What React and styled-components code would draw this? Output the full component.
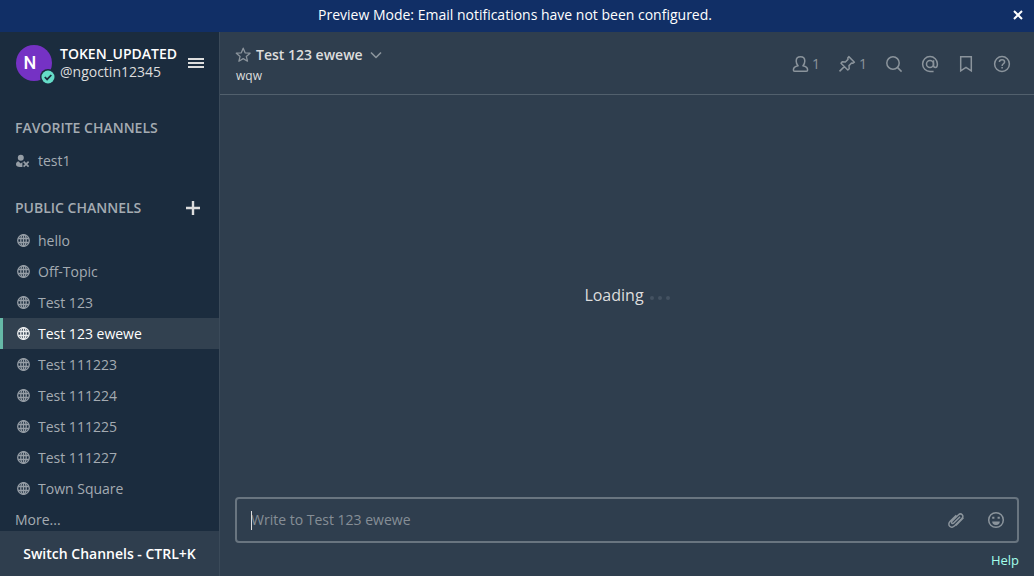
import React from "react";
import styled, { createGlobalStyle, css } from "styled-components";

const Global = createGlobalStyle`
  *, *::before, *::after { box-sizing: border-box; }
  body {
    margin: 0;
    background: #2f3e4e;
    color: #dddddd;
    font-family: "Open Sans", sans-serif;
    font-size: 14px;
    line-height: 20px;
  }
  button { font: inherit; color: inherit; background: none; border: 0; padding: 0; cursor: pointer; }
`;

const Page = styled.div`
  height: 100vh;
  display: flex;
  flex-direction: column;
`;

const Banner = styled.div`
  flex: none;
  height: 32px;
  padding: 0 10px 2px 18px;
  display: flex;
  align-items: center;
  background: #112f66;
  color: #ffffff;
`;

const BannerText = styled.span`
  flex: 1;
  text-align: center;
`;

const BannerClose = styled.button`
  width: 12px;
  display: flex;
  justify-content: center;
`;

const Body = styled.div`
  flex: 1;
  min-height: 0;
  display: flex;
`;

const Sidebar = styled.aside`
  flex: none;
  width: 220px;
  display: flex;
  flex-direction: column;
  background: #1b2c3e;
  border-right: 1px solid #3b4a59;
`;

const TeamHeader = styled.header`
  flex: none;
  height: 63px;
  padding: 0 15px 1px 16px;
  display: flex;
  align-items: center;
  gap: 8px;
`;

const Avatar = styled.div`
  position: relative;
  flex: none;
  width: 36px;
  height: 36px;
  border-radius: 50%;
  background: #7532c4;
  color: #ffffff;
  font: 500 18px/36px Roboto, sans-serif;
  padding-right: 8px;
  text-align: center;
`;

const Status = styled.svg`
  position: absolute;
  right: -4px;
  bottom: -4px;
`;

const Names = styled.div`
  flex: 1;
  display: flex;
  flex-direction: column;
  line-height: 18px;
`;

const TeamName = styled.strong`
  color: #ffffff;
  font-weight: 600;
`;

const MenuButton = styled.button`
  display: flex;
  color: #dddddd;
`;

const ChannelNav = styled.nav`
  flex: 1;
  min-height: 0;
  overflow: hidden;
  padding-top: 16px;
`;

const Section = styled.section`
  margin-bottom: 15px;
`;

const SectionTitle = styled.div`
  height: 34px;
  padding: 0 19px 0 15px;
  display: flex;
  align-items: center;
  justify-content: space-between;
  color: #a4abb2;

  h2 { margin: 0; font-size: 14px; font-weight: 600; }
  button { display: flex; color: #dddddd; }
`;

const List = styled.ul`
  margin: 0;
  padding: 0;
  list-style: none;
`;

const ChannelLink = styled.a`
  height: 31px;
  padding: 0 12px;
  border-left: 3px solid transparent;
  display: flex;
  align-items: center;
  gap: 7px;
  color: #a4abb2;
  text-decoration: none;

  svg { flex: none; opacity: 0.9; }

  ${({ $active }) => $active && css`
    border-left-color: #66b9a7;
    background: #324150;
    color: #ffffff;
  `}
`;

const Switcher = styled.button`
  flex: none;
  height: 45px;
  background: #2f3e4e;
  color: #ffffff;
  font-weight: 600;
`;

const Main = styled.main`
  flex: 1;
  min-width: 0;
  display: flex;
  flex-direction: column;
`;

const ChannelHeader = styled.header`
  flex: none;
  height: 63px;
  padding: 2px 23px 0 15px;
  border-bottom: 1px solid #52606d;
  display: flex;
  align-items: center;
  justify-content: space-between;
`;

const ChannelInfo = styled.div`
  padding-top: 2px;
`;

const TitleRow = styled.div`
  display: flex;
  align-items: center;
  gap: 5px;

  button { display: flex; color: #8b949c; }
  h1 { margin: 0 2px 0 0; font-size: 14px; line-height: 20px; font-weight: 600; }
`;

const Topic = styled.p`
  margin: 2px 0 0 1px;
  font-size: 12px;
  line-height: 18px;
`;

const Tools = styled.div`
  display: flex;
  align-items: center;
  gap: 18px;
`;

const ToolButton = styled.button`
  display: flex;
  align-items: center;
  gap: 3px;
  color: #8b949c;
`;

const Loading = styled.div`
  flex: 1;
  padding-bottom: 2px;
  display: flex;
  align-items: center;
  justify-content: center;
  gap: 6px;
  font-size: 16px;
`;

const Dots = styled.span`
  display: flex;
  gap: 4px;
  padding-top: 6px;

  i { width: 4px; height: 4px; border-radius: 50%; background: #445261; }
`;

const Composer = styled.form`
  flex: none;
  padding: 0 15px 6px;
`;

const InputBox = styled.div`
  position: relative;
  height: 46px;
  padding: 0 12px 0 14px;
  border: 2px solid #697580;
  border-radius: 4px;
  display: flex;
  align-items: center;
  gap: 22px;

  &::before {
    content: "";
    position: absolute;
    left: 14px;
    top: 12px;
    width: 1px;
    height: 19px;
    background: #dddddd;
  }
`;

const MessageInput = styled.input`
  flex: 1;
  min-width: 0;
  padding: 0;
  border: 0;
  outline: 0;
  background: none;
  color: #dddddd;
  font: inherit;

  &::placeholder { color: #868e96; opacity: 1; }
`;

const Help = styled.a`
  display: block;
  margin-top: 7px;
  text-align: right;
  font-size: 13px;
  color: #a4ffeb;
  text-decoration: none;
`;

const Icon = ({ size = 18, width = 1.5, box = 18, children }) => (
  <svg width={size} height={size} viewBox={`0 0 ${box} ${box}`} fill="none" stroke="currentColor"
    strokeWidth={width} strokeLinejoin="round" aria-hidden="true">
    {children}
  </svg>
);

const Globe = () => (
  <Icon size={16} box={16} width={1.3}>
    <circle cx="8.5" cy="7.5" r="5.8" />
    <ellipse cx="8.5" cy="7.5" rx="2.7" ry="5.8" />
    <path d="M8.5 1.7v11.6M3.2 5.5h10.6M3.2 9.5h10.6" />
  </Icon>
);

const RemovedUser = () => (
  <Icon size={16} box={16} width={1.6}>
    <circle cx="5.8" cy="4.8" r="3" fill="currentColor" stroke="none" />
    <path d="M3.3 8.2 5.8 10.4l1.6-1.4v5H5C2.3 14 1 12.9 1 11.2c0-1.4.8-2.5 2.3-3Z" fill="currentColor" stroke="none" />
    <path d="m8.6 8.6 5 5m0-5-5 5" />
  </Icon>
);

const tools = [
  { label: "Members", count: 1, icon: (
    <Icon>
      <path d="M9.5 1.8C6.8 1.8 5.2 3.6 5.2 6c0 2 .7 3.8 1.9 4.8-2.7.5-4.7 1.8-4.7 4.1 0 .8.4 1.3 1.2 1.3h11.8c.8 0 1.2-.5 1.2-1.3 0-2.3-2-3.6-4.7-4.1 1.2-1 1.9-2.8 1.9-4.8 0-2.4-1.6-4.2-4.3-4.2Z" />
    </Icon>
  ) },
  { label: "Pinned posts", count: 1, icon: (
    <Icon>
      <path d="m10.8 1.6 5.6 5.6-1.4 1-1.4-.2-2.6 2.6.2 3.2-1.4 1.2-6.8-6.8 1.2-1.4 3.2.2L10 4.4 9.8 3ZM6.3 11.6l-4.8 4.8" />
    </Icon>
  ) },
  { label: "Search", icon: (
    <Icon><circle cx="8" cy="8" r="6.2" /><path d="m12.4 12.4 4.2 4.2" /></Icon>
  ) },
  { label: "Recent mentions", icon: (
    <Icon>
      <circle cx="9" cy="9" r="3.5" />
      <path d="M12.5 5.3v5c0 1.4.7 2.2 1.9 2.2 1.3 0 2-1.3 2-3.5A7.4 7.4 0 1 0 9 16.4h3.6" />
    </Icon>
  ) },
  { label: "Saved posts", icon: (
    <Icon><path d="M3.7 1.8h10.6v14L9 12.4l-5.3 3.4Z" strokeLinejoin="miter" /></Icon>
  ) },
  { label: "Help", icon: (
    <Icon>
      <circle cx="9" cy="9" r="7.4" />
      <path d="M6.4 7.1c0-1.4 1.1-2.4 2.6-2.4s2.6.9 2.6 2.2c0 1.9-2.5 1.9-2.5 4M9.1 12v1.6" />
    </Icon>
  ) },
];

const channels = [
  "hello", "Off-Topic", "Test 123", "Test 123 ewewe", "Test 111223",
  "Test 111224", "Test 111225", "Test 111227", "Town Square",
];

export default function App() {
  return (
    <Page>
      <Global />
      <Banner>
        <BannerText>Preview Mode: Email notifications have not been configured.</BannerText>
        <BannerClose aria-label="Close">
          <Icon size={10} box={10} width={2}><path d="m1 1 8 8m0-8L1 9" /></Icon>
        </BannerClose>
      </Banner>
      <Body>
        <Sidebar>
          <TeamHeader>
            <Avatar>
              N
              <Status width="16" height="16" viewBox="0 0 16 16" aria-hidden="true">
                <circle cx="8" cy="8" r="8" fill="#1b2c3e" />
                <circle cx="8" cy="8" r="6.5" fill="#65dcc8" />
                <path d="m4.8 8 2.3 2.4 4.2-4.4" fill="none" stroke="#1b2c3e" strokeWidth="1.8" />
              </Status>
            </Avatar>
            <Names>
              <TeamName>TOKEN_UPDATED</TeamName>
              <span>@ngoctin12345</span>
            </Names>
            <MenuButton aria-label="Main menu">
              <Icon size={16} box={16} width={2}><path d="M0 4h16M0 8h16M0 12h16" /></Icon>
            </MenuButton>
          </TeamHeader>
          <ChannelNav>
            <Section>
              <SectionTitle><h2>FAVORITE CHANNELS</h2></SectionTitle>
              <List>
                <li><ChannelLink href="#test1"><RemovedUser />test1</ChannelLink></li>
              </List>
            </Section>
            <Section>
              <SectionTitle>
                <h2>PUBLIC CHANNELS</h2>
                <button aria-label="Add channel">
                  <Icon size={14} box={14} width={2.4}><path d="M7 0v14M0 7h14" /></Icon>
                </button>
              </SectionTitle>
              <List>
                {channels.map((name) => (
                  <li key={name}>
                    <ChannelLink href="#channel" $active={name === "Test 123 ewewe"}><Globe />{name}</ChannelLink>
                  </li>
                ))}
                <li><ChannelLink href="#more">More...</ChannelLink></li>
              </List>
            </Section>
          </ChannelNav>
          <Switcher>Switch Channels - CTRL+K</Switcher>
        </Sidebar>
        <Main>
          <ChannelHeader>
            <ChannelInfo>
              <TitleRow>
                <button aria-label="Add to favorites">
                  <Icon size={16} box={16} width={1.3}>
                    <path d="m8.2 1.2 1.9 4.6 5 .4-3.8 3.2 1.2 4.8-4.3-2.6-4.3 2.6 1.2-4.8-3.8-3.2 5-.4Z" />
                  </Icon>
                </button>
                <h1>Test 123 ewewe</h1>
                <button aria-label="Channel menu">
                  <Icon size={12} box={12} width={1.6}><path d="m1 3.5 5 5 5-5" /></Icon>
                </button>
              </TitleRow>
              <Topic>wqw</Topic>
            </ChannelInfo>
            <Tools>
              {tools.map(({ label, count, icon }) => (
                <ToolButton key={label} aria-label={label}>{icon}{count}</ToolButton>
              ))}
            </Tools>
          </ChannelHeader>
          <Loading>
            Loading
            <Dots><i /><i /><i /></Dots>
          </Loading>
          <Composer>
            <InputBox>
              <MessageInput aria-label="Message" placeholder="Write to Test 123 ewewe" />
              <ToolButton type="button" aria-label="Attach file">
                <Icon>
                  <path d="m12.8 5.2-6.4 6.3c-.6.6-1.4.7-1.9.2s-.4-1.3.2-1.9L11 3.5c1.2-1.2 2.9-1.3 3.9-.3s.9 2.7-.3 3.9l-7.2 7.2c-1.6 1.6-3.7 1.8-5 .5s-1.1-3.4.5-5L9 3.7" transform="translate(0.3 0.5)" />
                  <path d="m16.4 6.8-7.6 7.6" />
                </Icon>
              </ToolButton>
              <ToolButton type="button" aria-label="Emoji picker">
                <Icon>
                  <circle cx="9" cy="9" r="7.3" />
                  <path d="M5.2 10.5h7.6A3.8 3.4 0 0 1 5.2 10.5Z" fill="currentColor" stroke="none" />
                  <path d="M5.2 6.7h2.2M10.6 6.7h2.2" strokeWidth="2" />
                </Icon>
              </ToolButton>
            </InputBox>
            <Help href="#help">Help</Help>
          </Composer>
        </Main>
      </Body>
    </Page>
  );
}
